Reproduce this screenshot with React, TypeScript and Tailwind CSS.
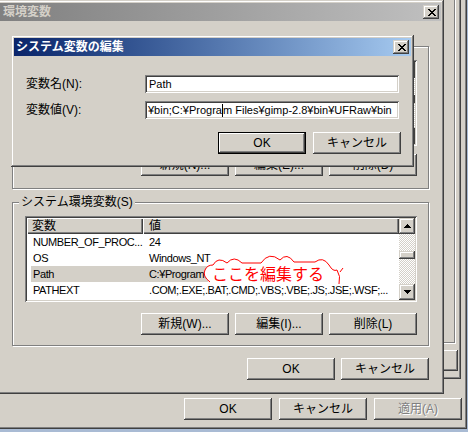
import React from 'react';

const frame =
  'shadow-[inset_-1px_-1px_0_#404040,inset_1px_1px_0_#d4d0c8,inset_-2px_-2px_0_#808080,inset_2px_2px_0_#ffffff]';
const raised =
  'shadow-[inset_-1px_-1px_0_#404040,inset_1px_1px_0_#ffffff,inset_-2px_-2px_0_#808080,inset_2px_2px_0_#d4d0c8]';
const defRaised =
  'shadow-[inset_0_0_0_1px_#000000,inset_-2px_-2px_0_#404040,inset_2px_2px_0_#ffffff,inset_-3px_-3px_0_#808080]';
const sunken =
  'shadow-[inset_1px_1px_0_#808080,inset_-1px_-1px_0_#ffffff,inset_2px_2px_0_#404040,inset_-2px_-2px_0_#d4d0c8]';
const etched = 'border border-[#808080] shadow-[inset_1px_1px_0_#ffffff,1px_1px_0_#ffffff]';
const headerCell = 'shadow-[inset_1px_1px_0_#ffffff,inset_-1px_-1px_0_#404040,inset_-2px_-2px_0_#808080]';

const CloseGlyph = () => (
  <svg width="8" height="7" viewBox="0 0 8 7" shapeRendering="crispEdges">
    <path
      fill="#000"
      d="M0 0h2v1H0zM6 0h2v1H6zM1 1h2v1H1zM5 1h2v1H5zM2 2h4v1H2zM3 3h2v1H3zM2 4h4v1H2zM1 5h2v1H1zM5 5h2v1H5zM0 6h2v1H0zM6 6h2v1H6z"
    />
  </svg>
);

const CloseBtn = () => (
  <div className={`w-[16px] h-[14px] bg-[#d4d0c8] flex items-center justify-center pl-[1px] ${frame}`}>
    <CloseGlyph />
  </div>
);

const Arrow = ({ down = false }: { down?: boolean }) => (
  <svg width="7" height="4" viewBox="0 0 7 4" shapeRendering="crispEdges">
    <path fill="#000" d={down ? 'M0 0h7v1H0zM1 1h5v1H1zM2 2h3v1H2zM3 3h1v1H3z' : 'M3 0h1v1H3zM2 1h3v1H2zM1 2h5v1H1zM0 3h7v1H0z'} />
  </svg>
);

interface BtnProps {
  label: string;
  def?: boolean;
  disabled?: boolean;
}

const Btn: React.FC<BtnProps> = ({ label, def = false, disabled = false }) => (
  <div
    className={`w-[88px] h-[22px] bg-[#d4d0c8] flex items-center justify-center text-[12px] leading-none ${
      def ? defRaised : raised
    } ${disabled ? 'text-[#808080] [text-shadow:1px_1px_0_#ffffff]' : 'text-black'}`}
  >
    {label}
  </div>
);

const sysRows = [
  { name: 'NUMBER_OF_PROC...', value: '24' },
  { name: 'OS', value: 'Windows_NT' },
  { name: 'Path', value: 'C:¥Program', selected: true },
  { name: 'PATHEXT', value: '.COM;.EXE;.BAT;.CMD;.VBS;.VBE;.JS;.JSE;.WSF;...' },
];

const ListView = ({ rows }: { rows: { name: string; value: string; selected?: boolean }[] }) => (
  <div className={`w-[392px] h-[86px] bg-white p-[2px] flex ${sunken}`}>
    <div className="flex-1 flex flex-col overflow-hidden">
      <div className="h-[16px] flex text-[12px] bg-[#d4d0c8]">
        <div className={`w-[116px] h-full flex items-center pl-[5px] ${headerCell}`}>変数</div>
        <div className={`flex-1 h-full flex items-center pl-[6px] ${headerCell}`}>値</div>
      </div>
      {rows.map((r) => (
        <div key={r.name} className="h-[16px] flex text-[11px] tracking-[-0.4px] leading-none whitespace-nowrap">
          <div className="w-[116px] h-full pl-[4px] flex overflow-hidden">
            <div className={`flex-1 h-full flex items-center pl-[2px] ${r.selected ? 'bg-[#d4d0c8]' : ''}`}>{r.name}</div>
          </div>
          <div className="flex-1 h-full flex overflow-hidden">
            <div className={`h-full flex items-center pl-[6px] ${r.selected ? 'bg-[#d4d0c8] w-[65px]' : ''}`}>{r.value}</div>
          </div>
        </div>
      ))}
    </div>
    <div className="w-[16px] h-full flex flex-col">
      <div className={`h-[16px] bg-[#d4d0c8] flex items-center justify-center ${frame}`}>
        <Arrow />
      </div>
      <div className="flex-1 bg-[image:repeating-conic-gradient(#ffffff_0_25%,#d4d0c8_0_50%)] bg-[length:2px_2px] pt-[17px]">
        <div className={`h-[8px] bg-[#d4d0c8] ${frame}`} />
      </div>
      <div className={`h-[16px] bg-[#d4d0c8] flex items-center justify-center ${frame}`}>
        <Arrow down />
      </div>
    </div>
  </div>
);

export default function App() {
  return (
    <div className="relative w-[468px] h-[432px] overflow-hidden bg-[#a9bbd4] font-[Liberation_Sans,Noto_Sans_CJK_JP,sans-serif] text-[12px] text-black">
      {/* system properties window (behind) */}
      <div className={`absolute left-[-3px] top-[-40px] w-[470px] h-[469px] bg-[#d4d0c8] p-[3px] flex flex-col justify-end ${frame}`}>
        <div className="flex justify-end gap-[7px] pr-[2px] pb-[6px]">
          <Btn label="OK" />
          <Btn label="キャンセル" />
          <Btn label="適用(A)" disabled />
        </div>
      </div>

      {/* its tab page, group box and button, peeking out at the right */}
      <div className={`absolute left-[-3px] top-[-3px] w-[464px] h-[382px] bg-[#d4d0c8] ${raised}`} />
      <div className={`absolute left-[-3px] top-[-3px] w-[458px] h-[346px] ${etched}`} />
      <div className={`absolute left-[369px] top-[350px] w-[89px] h-[21px] bg-[#d4d0c8] ${raised}`} />

      {/* 環境変数 window */}
      <div className={`absolute left-[-3px] top-0 w-[447px] h-[394px] bg-[#d4d0c8] p-[3px] ${frame}`}>
        <div className="h-[18px] bg-gradient-to-r from-[#808080] to-[#c0c0c0] flex items-center justify-between pl-[3px] pr-[2px]">
          <span className="font-bold text-[#d4d0c8] text-[12px] leading-none">環境変数</span>
          <CloseBtn />
        </div>

        <div className="pl-[12px] pt-[25px]">
          {/* user variables group, mostly hidden under the edit dialog */}
          <div className={`w-[417px] h-[143px] ${etched}`}>
            <div className="pl-[12px] pt-[13px]">
              <ListView rows={[]} />
              <div className="w-[392px] flex justify-end gap-[6px] mt-[8px]">
                <Btn label="新規(N)..." />
                <Btn label="編集(E)..." />
                <Btn label="削除(D)" />
              </div>
            </div>
          </div>

          {/* system variables group */}
          <div className={`relative w-[417px] h-[144px] mt-[13px] ${etched}`}>
            <span className="absolute left-[6px] top-[-8px] px-[2px] bg-[#d4d0c8] leading-[14px]">システム環境変数(S)</span>
            <div className="pl-[12px] pt-[13px]">
              <ListView rows={sysRows} />
              <div className="w-[392px] flex justify-end gap-[6px] mt-[11px]">
                <Btn label="新規(W)..." />
                <Btn label="編集(I)..." />
                <Btn label="削除(L)" />
              </div>
            </div>
          </div>

          <div className="w-[417px] flex justify-end gap-[6px] mt-[12px]">
            <Btn label="OK" />
            <Btn label="キャンセル" />
          </div>
        </div>
      </div>

      {/* annotation bubble */}
      <svg className="absolute left-[196px] top-[250px]" width="154" height="38" viewBox="196 250 154 38">
        <path
          fill="#ffffff"
          d="M210 282 Q202 276 205 270 Q207 265 213 265 Q218 256 227 263 Q234 255 242 263 L261 263 Q269 251 280 260 Q287 252 294 262 L315 262 Q323 256 329 265 Q333 272 337 270 L337 282 Z"
        />
        <path
          fill="none"
          stroke="#ff0000"
          strokeWidth="1"
          d="M210 282 Q202 276 205 270 Q207 265 213 265 Q218 256 227 263 Q234 255 242 263 L261 263 Q269 251 280 260 Q287 252 294 262 L315 262 Q323 256 329 265 Q333 272 337 270 M337 270 Q341 276 339 284 M340 272 L343 268"
        />
      </svg>
      <span className="absolute left-[212px] top-[265px] text-[16px] leading-[16px] text-[#ff0000] font-[Noto_Sans_CJK_JP,sans-serif]">
        ここを編集する
      </span>

      {/* システム変数の編集 dialog */}
      <div className={`absolute left-[11px] top-[35px] w-[403px] h-[132px] bg-[#d4d0c8] p-[3px] ${frame}`}>
        <div className="h-[18px] bg-gradient-to-r from-[#0a246a] to-[#a6caf0] flex items-center justify-between pl-[2px] pr-[2px]">
          <span className="font-bold text-white text-[12px] leading-none">システム変数の編集</span>
          <CloseBtn />
        </div>
        <div className="pl-[12px] pt-[19px] flex flex-col gap-[8px]">
          <div className="flex items-center">
            <span className="w-[119px] leading-none">変数名(N):</span>
            <div className={`w-[254px] h-[18px] bg-white flex items-center pl-[4px] text-[11px] leading-none ${sunken}`}>Path</div>
          </div>
          <div className="flex items-center">
            <span className="w-[119px] leading-none">変数値(V):</span>
            <div className={`w-[254px] h-[18px] bg-white flex items-center pl-[3px] text-[11px] leading-none whitespace-nowrap overflow-hidden ${sunken}`}>
              ¥bin;C:¥Progra
              <span className="inline-block w-0 h-[13px] border-l border-black" />
              m Files¥gimp-2.8¥bin¥UFRaw¥bin
            </div>
          </div>
        </div>
        <div className="flex justify-end gap-[7px] pr-[10px] mt-[13px]">
          <Btn label="OK" def />
          <Btn label="キャンセル" />
        </div>
      </div>
    </div>
  );
}
